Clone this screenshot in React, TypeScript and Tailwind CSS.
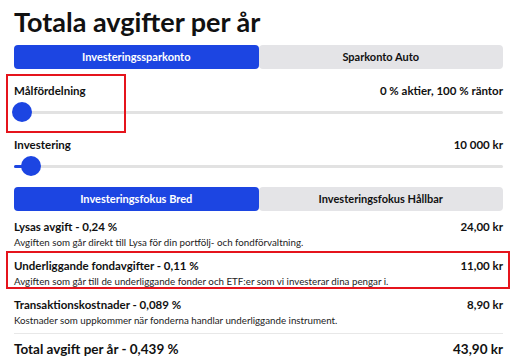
import React, { useState } from 'react';

const FeeRow = ({ title, desc, amount }: { title: string; desc: string; amount: string }) => (
    <div className="flex flex-col">
        <div className="flex h-[16px] items-center justify-between text-[11.5px] font-bold text-[#111]">
            <span>{title}</span>
            <span>{amount}</span>
        </div>
        <p className="h-[15px] text-[9.75px] leading-[15px] text-[#222]">{desc}</p>
    </div>
);

const Tabs = ({ options, active, onChange }: { options: string[]; active: number; onChange: (i: number) => void }) => (
    <div className="flex h-[24px]">
        {options.map((opt, i) => (
            <button
                key={opt}
                onClick={() => onChange(i)}
                className={
                    i === active
                        ? 'flex-1 rounded-[4px] bg-[#1c45e2] text-[11px] font-bold text-white'
                        : 'flex-1 rounded-[4px] bg-[#e4e4e7] text-[11px] font-bold text-[#111]'
                }
            >
                {opt}
            </button>
        ))}
    </div>
);

const Slider = ({ pos }: { pos: number }) => (
    <div className="relative h-[20px]">
        <div className="absolute left-0 right-0 top-[9px] h-[3px] rounded bg-[#e2e2e2]" />
        <div className="absolute left-0 top-[9px] h-[3px] rounded bg-[#1c45e2]" style={{ width: pos }} />
        <div
            className="absolute top-0 h-[20px] w-[20px] -translate-x-1/2 rounded-full bg-[#1c45e2]"
            style={{ left: pos }}
        />
    </div>
);

const App = () => {
    const [account, setAccount] = useState(0);
    const [focus, setFocus] = useState(0);

    return (
        <div className="relative h-[363px] w-[517px] overflow-hidden bg-white px-[14px] pt-[7px] font-['Lato',sans-serif] text-[#111]">
            <h1 className="text-[27px] font-bold leading-[30px]">Totala avgifter per år</h1>

            <div className="mt-[8px]">
                <Tabs options={['Investeringssparkonto', 'Sparkonto Auto']} active={account} onChange={setAccount} />
            </div>

            <div className="mt-[14px] flex h-[16px] items-center justify-between text-[11.5px] font-bold">
                <span>Målfördelning</span>
                <span>0 % aktier, 100 % räntor</span>
            </div>
            <div className="mt-[3px]">
                <Slider pos={8} />
            </div>

            <div className="mt-[15px] flex h-[16px] items-center justify-between text-[11.5px] font-bold">
                <span>Investering</span>
                <span>10 000 kr</span>
            </div>
            <div className="mt-[3px]">
                <Slider pos={17} />
            </div>

            <div className="mt-[11px]">
                <Tabs options={['Investeringsfokus Bred', 'Investeringsfokus Hållbar']} active={focus} onChange={setFocus} />
            </div>

            <div className="mt-[8px] flex flex-col gap-[8px]">
                <FeeRow
                    title="Lysas avgift - 0,24 %"
                    amount="24,00 kr"
                    desc="Avgiften som går direkt till Lysa för din portfölj- och fondförvaltning."
                />
                <FeeRow
                    title="Underliggande fondavgifter - 0,11 %"
                    amount="11,00 kr"
                    desc="Avgiften som går till de underliggande fonder och ETF:er som vi investerar dina pengar i."
                />
                <FeeRow
                    title="Transaktionskostnader - 0,089 %"
                    amount="8,90 kr"
                    desc="Kostnader som uppkommer när fonderna handlar underliggande instrument."
                />
            </div>

            <div className="mt-[5px] border-t border-[#e8e8e8] pt-[5px]">
                <div className="flex h-[20px] items-center justify-between text-[13.5px] font-bold">
                    <span>Total avgift per år - 0,439 %</span>
                    <span>43,90 kr</span>
                </div>
            </div>

            {/* annotation boxes */}
            <div className="pointer-events-none absolute left-[6px] top-[74px] h-[59px] w-[120px] border-2 border-[#e5141c]" />
            <div className="pointer-events-none absolute left-[6px] top-[251px] h-[38px] w-[504px] border-2 border-[#e5141c]" />
        </div>
    );
};

export default App;
